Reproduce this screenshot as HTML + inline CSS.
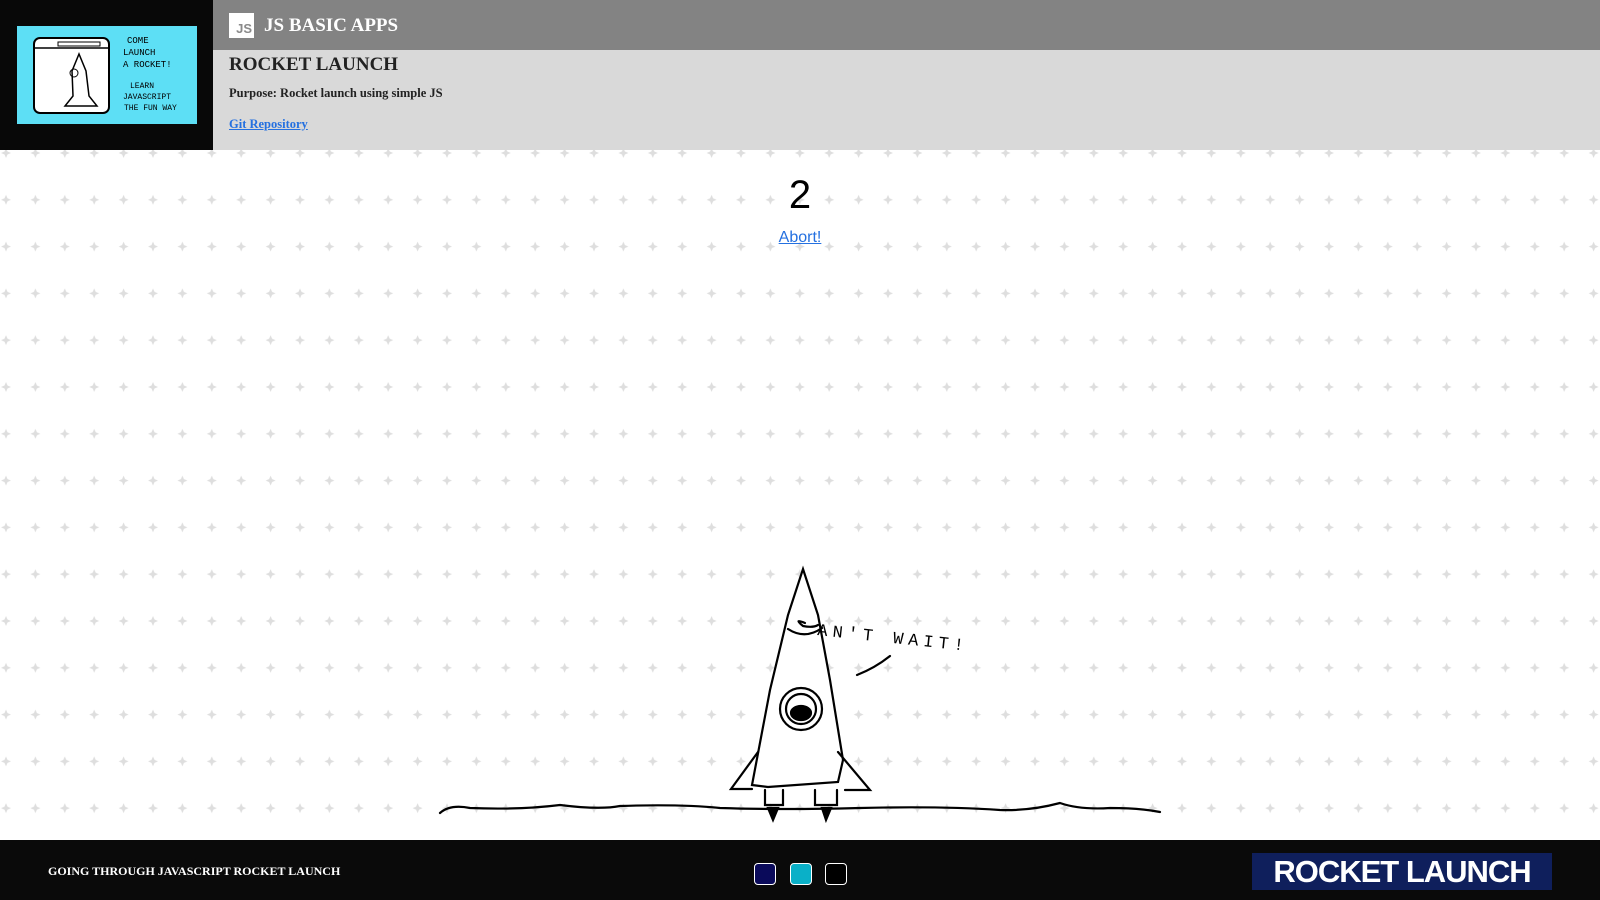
<!DOCTYPE html>
<html><head><meta charset="utf-8"><style>
*{margin:0;padding:0;box-sizing:border-box}
body{width:1600px;height:900px;overflow:hidden;background:#fff;font-family:"Liberation Serif",serif;position:relative}
.left{position:absolute;left:0;top:0;width:213px;height:150px;background:#080808}
.top{position:absolute;left:213px;top:0;right:0;height:50px;background:#838383;color:#fff}
.sub{position:absolute;left:213px;top:50px;right:0;height:100px;background:#d9d9d9;color:#222}
.foot{position:absolute;left:0;top:840px;width:1600px;height:60px;background:#0a0a0a}
</style></head><body>
<svg style="position:absolute;left:0;top:150px" width="1600" height="690">
<defs><pattern id="p" width="29.4" height="46.8" patternUnits="userSpaceOnUse" x="-8" y="-2">
<path d="M14 0 L15.5 3.5 L19 5 L15.5 6.5 L14 10 L12.5 6.5 L9 5 L12.5 3.5Z" fill="#dedede"/></pattern></defs>
<rect width="1600" height="690" fill="url(#p)"/>
</svg>
<div class="left">
<svg style="position:absolute;left:17px;top:26px" width="180" height="98">
<rect width="180" height="98" fill="#5ddff5"/>
<rect x="17" y="12" width="75" height="75" rx="6" fill="#fff" stroke="#000" stroke-width="2"/>
<line x1="17" y1="22" x2="92" y2="22" stroke="#000" stroke-width="1.5"/>
<rect x="41" y="16" width="42" height="4" fill="none" stroke="#000"/>
<path d="M55 45 L62 28 L69 45 L72 70 L80 80 L56 80 L48 80 L56 70Z" fill="#fff" stroke="#000" stroke-width="1.5"/>
<circle cx="57" cy="47" r="4" fill="none" stroke="#000"/>
<text x="110" y="17" font-family="Liberation Mono,monospace" font-size="9" fill="#000">COME</text>
<text x="106" y="29" font-family="Liberation Mono,monospace" font-size="9">LAUNCH</text>
<text x="106" y="41" font-family="Liberation Mono,monospace" font-size="9">A ROCKET!</text>
<text x="113" y="62" font-family="Liberation Mono,monospace" font-size="8">LEARN</text>
<text x="106" y="73" font-family="Liberation Mono,monospace" font-size="8">JAVASCRIPT</text>
<text x="107" y="84" font-family="Liberation Mono,monospace" font-size="8">THE FUN WAY</text>
</svg></div>
<div class="top">
<div style="position:absolute;left:16px;top:13px;width:25px;height:25px;background:#fff;color:#8a8a8a;font:bold 13px 'Liberation Sans',sans-serif;text-align:right;padding:9px 2px 0 0;line-height:14px">JS</div>
<div style="position:absolute;left:51px;top:15px;font-weight:bold;font-size:19px">JS BASIC APPS</div>
</div>
<div class="sub">
<div style="position:absolute;left:16px;top:4px;font-weight:bold;font-size:19px">ROCKET LAUNCH</div>
<div style="position:absolute;left:16px;top:36px;font-weight:bold;font-size:12.5px">Purpose: Rocket launch using simple JS</div>
<div style="position:absolute;left:16px;top:67px;font-weight:bold;font-size:12.5px;color:#2470e0;text-decoration:underline">Git Repository</div>
</div>
<div style="position:absolute;left:0;width:1600px;top:173px;text-align:center;font:40px 'Liberation Sans',sans-serif;color:#000">2</div>
<div style="position:absolute;left:0;width:1600px;top:229px;text-align:center;font:16px 'Liberation Sans',sans-serif;color:#2470e0;text-decoration:underline">Abort!</div>
<svg style="position:absolute;left:0;top:0" width="1600" height="840" fill="none" stroke="#000" stroke-width="2.2" stroke-linecap="round">
<path d="M803 569 L818 615 L830 680 L843 760 L838 782 L768 787 L752 785 L770 690 L788 615Z" fill="#fff"/>
<path d="M788 629 Q805 640 822 628"/>
<path d="M805 623 Q793 618 803 626 Q813 628 818 625"/>
<circle cx="801" cy="709" r="21"/><circle cx="801" cy="709" r="15"/>
<ellipse cx="801" cy="713" rx="10" ry="7" fill="#000"/>
<path d="M758 752 L731 789 L752 789"/><path d="M838 752 L870 790 L845 790"/>
<path d="M765 790 L765 805 L783 805 L783 790 M815 790 L815 805 L837 805 L837 790"/>
<path d="M768 808 L773 820 L778 808Z M822 808 L826 820 L831 808Z" fill="#000"/>
<path d="M440 813 Q450 804 470 808 Q520 810 560 805 Q600 810 620 806 Q680 804 720 808 Q780 810 860 808 Q940 806 1000 810 Q1030 811 1060 803 Q1080 810 1110 808 Q1140 808 1160 812"/>
<path d="M857 675 Q875 668 890 656"/>
<text x="817" y="635" font-family="Liberation Mono,monospace" font-size="17" fill="#000" stroke="none" transform="rotate(6 817 635)" letter-spacing="5">AN'T  WAIT!</text>
</svg>
<div class="foot">
<div style="position:absolute;left:48px;top:24px;color:#fff;font-weight:bold;font-size:12px">GOING THROUGH JAVASCRIPT ROCKET LAUNCH</div>
<div style="position:absolute;left:754px;top:23px;width:22px;height:22px;border:1px solid #fff;border-radius:4px;background:#0a0a5a"></div>
<div style="position:absolute;left:790px;top:23px;width:22px;height:22px;border:1px solid #fff;border-radius:4px;background:#0ab0c8"></div>
<div style="position:absolute;left:825px;top:23px;width:22px;height:22px;border:1px solid #fff;border-radius:4px;background:#000"></div>
<div style="position:absolute;left:1252px;top:13px;width:300px;height:37px;background:#0f1f5c;color:#fff;font:bold 31px 'Liberation Sans',sans-serif;text-align:center;line-height:37px;letter-spacing:-1px">ROCKET LAUNCH</div>
</div>
</body></html>
